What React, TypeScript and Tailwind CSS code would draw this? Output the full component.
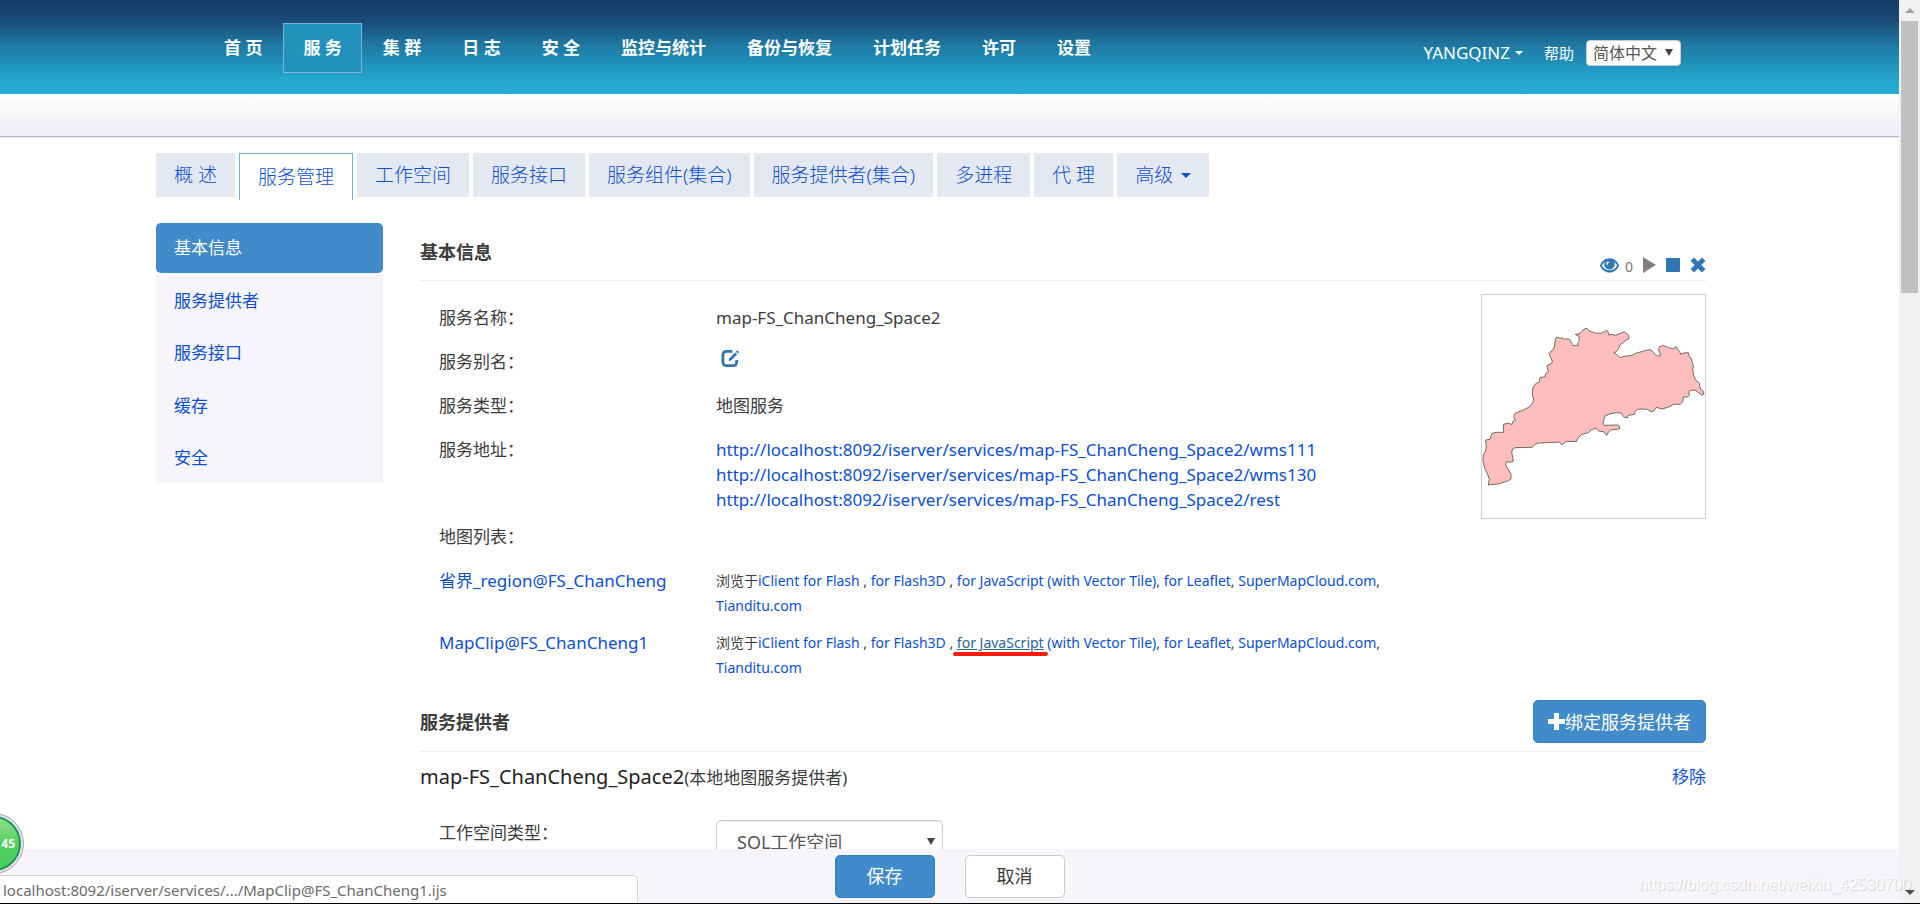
import type { ReactNode } from "react";

const navItems = [
  "首 页",
  "服 务",
  "集 群",
  "日 志",
  "安 全",
  "监控与统计",
  "备份与恢复",
  "计划任务",
  "许可",
  "设置",
];

const tabs = [
  "概 述",
  "服务管理",
  "工作空间",
  "服务接口",
  "服务组件(集合)",
  "服务提供者(集合)",
  "多进程",
  "代 理",
];

const sideItems = ["基本信息", "服务提供者", "服务接口", "缓存", "安全"];

const base = "http://localhost:8092/iserver/services/map-FS_ChanCheng_Space2";
const addresses = [`${base}/wms111`, `${base}/wms130`, `${base}/rest`];

function Caret({ className }: { className: string }) {
  return (
    <svg viewBox="0 0 10 5" className={className} aria-hidden="true">
      <path d="M0 0h10L5 5z" fill="currentColor" />
    </svg>
  );
}

function SelectArrow({ className }: { className: string }) {
  return (
    <svg
      viewBox="0 0 8 7"
      className={`pointer-events-none absolute h-[7px] w-2 text-[#444] ${className}`}
      aria-hidden="true"
    >
      <path d="M0 0h8L4 7z" fill="currentColor" />
    </svg>
  );
}

function EyeIcon() {
  return (
    <svg viewBox="1 1 18 14" className="h-[15px] w-[19px]" aria-hidden="true">
      <path
        d="M10 1.2C5.600 1.200 2.300 4.400 1 8c1.300 3.600 4.600 6.700 9 6.700s7.700-3.100 9-6.700C17.700 4.400 14.400 1.200 10 1.200z"
        fill="#3276b1"
      />
      <path
        d="M5.600 4.600C4.300 5.500 3.300 6.700 2.800 8c1.200 2.700 3.900 4.600 7.200 4.600s6-1.900 7.200-4.600c-.5-1.300-1.500-2.500-2.800-3.400.4.800.6 1.500.6 2.300a5 5 0 0 1-10 0c0-.8.200-1.500.6-2.300z"
        fill="#fff"
      />
      <path d="M8.600 4c-1.100.5-1.800 1.500-1.800 2.800l1.500.8C8.200 6.300 8.900 5.700 9.800 5.300z" fill="#fff" />
    </svg>
  );
}

function EditIcon() {
  return (
    <svg viewBox="0 0 20 20" className="h-[19px] w-[19px]" fill="none" aria-hidden="true">
      <path
        d="M12 2.500H5.500a3.500 3.500 0 0 0-3.500 3.500v8a3.500 3.500 0 0 0 3.500 3.500h7.500a3.500 3.500 0 0 0 3.500-3.500v-2.500"
        stroke="#3276b1"
        strokeWidth="3"
      />
      <path d="M8 12.800l.8-3.100 6-6 2.200 2.200-6 6z" fill="#3276b1" />
      <path d="M15.700 2.800l1.400-1.400 2 2-1.400 1.400z" fill="#3276b1" />
    </svg>
  );
}

function CrossIcon() {
  return (
    <svg viewBox="0 0 16 16" className="h-4 w-4" aria-hidden="true">
      <path
        d="M4 .6 8 4.600l4-4L15.400 4l-4 4 4 4L12 15.400l-4-4-4 4L.6 12l4-4-4-4z"
        fill="#3276b1"
      />
    </svg>
  );
}

function ProvinceMap() {
  return (
    <svg viewBox="66 165 669 669" className="block h-full w-full" aria-label="地图缩略图" role="img">
      <path
        d="M288 293L296 292 300 296 306 293 313 298 320 296 330 299 334 308 341 318 347 316 355 316 353 308 358 303 356 294 359 289 352 287 346 283 360 281 368 271 378 265 384 268 387 273 398 276 408 280 418 279 424 281 428 276 433 277 438 271 444 274 446 285 456 283 466 286 480 281 492 275 498 280 507 287 506 297 496 302 489 309 480 314 475 327 469 335 461 338 472 345 480 353 492 349 505 347 516 347 522 342 530 339 545 335 558 331 570 329 578 334 586 344 592 348 601 347 600 338 596 332 598 321 608 316 620 320 632 325 640 326 646 321 650 321 652 329 659 334 662 343 672 339 685 338 687 347 693 354 697 368 701 380 698 384 701 406 707 420 718 430 720 444 731 456 731 464 725 465 716 458 704 450 692 451 686 455 689 465 682 471 670 471 668 486 660 493 642 492 628 500 607 507 588 502 583 512 574 515 562 508 548 507 532 508 526 514 523 523 505 526 502 534 490 530 484 519 470 518 448 522 434 529 430 545 429 552 434 556 473 555 480 561 478 567 452 570 446 575 440 586 431 575 416 573 409 565 396 568 385 578 364 584 354 594 349 605 320 604 305 614 298 606 236 609 225 613 217 622 165 623 158 628 155 636 158 652 160 664 148 667 140 664 137 675 146 690 153 703 153 717 140 724 118 731 85 735 88 718 83 703 74 685 69 662 70 645 77 633 79 618 77 600 90 598 96 580 110 577 131 577 130 553 146 549 156 554 158 545 166 541 161 530 166 519 190 510 208 501 218 489 221 477 217 465 218 445 226 432 238 425 240 412 254 411 257 401 265 396 261 377 275 370 277 363 271 350 267 340 276 332 283 322 285 306z"
        fill="#ffbebe"
        stroke="#6e6e5c"
        strokeWidth="3"
        strokeLinejoin="round"
      />
    </svg>
  );
}

function Row({ label, tall, children }: { label: ReactNode; tall?: boolean; children?: ReactNode }) {
  return (
    <div className={`grid grid-cols-[277px_minmax(0,1fr)] ${tall ? "mb-3" : "mb-[19px]"}`}>
      <dt>{label}</dt>
      <dd>{children}</dd>
    </div>
  );
}

function ViewLinks({ marked }: { marked?: boolean }) {
  return (
    <p className="text-sm leading-[25px]">
      浏览于<a href="#flash" className="text-[#0b50d0]">iClient for Flash</a> ,{" "}
      <a href="#flash3d" className="text-[#0b50d0]">for Flash3D</a> ,{" "}
      {marked ? (
        <a href="#js" className="relative text-[#2a6496] underline">
          for JavaScript
          <span className="absolute -inset-x-1 -bottom-1 h-1 rounded-full bg-[#ff1c0c]" />
        </a>
      ) : (
        <a href="#js" className="text-[#0b50d0]">for JavaScript</a>
      )}{" "}
      <a href="#vector" className="text-[#0b50d0]">(with Vector Tile)</a>,{" "}
      <a href="#leaflet" className="text-[#0b50d0]">for Leaflet</a>,{" "}
      <a href="#cloud" className="text-[#0b50d0]">SuperMapCloud.com</a>,{" "}
      <a href="#tianditu" className="text-[#0b50d0]">Tianditu.com</a>
    </p>
  );
}

function Header() {
  return (
    <header className="h-[94px] shrink-0 bg-[linear-gradient(#163966_0%,#194a75_20%,#1f7ba5_50%,#23a5cd_84%,#26acd1_100%)] text-white">
      <div className="mx-auto flex max-w-[1587px] justify-between pl-12 pr-[62px]">
        <nav className="flex gap-px pt-[23px] text-[17px] font-bold">
          {navItems.map((item, i) => (
            <a
              key={item}
              href="#nav"
              className={`flex h-[50px] items-center whitespace-nowrap border px-[19px] ${
                i === 1 ? "border-[#7fb3d3] bg-[#2192bb]" : "border-transparent"
              }`}
            >
              {item}
            </a>
          ))}
        </nav>
        <div className="mt-10 flex h-[26px] items-center">
          <button className="flex items-center gap-[5px] text-[17px]">
            YANGQINZ
            <Caret className="h-1 w-2" />
          </button>
          <a href="#help" className="ml-[21px] text-[15px]">帮助</a>
          <div className="relative ml-3">
            <select
              aria-label="语言"
              className="block h-[26px] w-[95px] appearance-none rounded border border-[#ccc] bg-white pl-[6px] text-base leading-6 text-[#555]"
            >
              <option>简体中文</option>
            </select>
            <SelectArrow className="right-2 top-[9px]" />
          </div>
        </div>
      </div>
    </header>
  );
}

function Tabs() {
  return (
    <nav className="flex h-[47px] items-start gap-1 text-[19px] font-light text-[#0b50d0]">
      {tabs.map((tab, i) => (
        <a
          key={tab}
          href="#tab"
          className={
            i === 1
              ? "flex h-[47px] items-center whitespace-nowrap border border-b-0 border-[#6fb1df] bg-white px-[18px]"
              : "flex h-11 items-center whitespace-nowrap bg-[#e4e8f0] px-[18px]"
          }
        >
          {tab}
        </a>
      ))}
      <button className="flex h-11 items-center gap-2 bg-[#e4e8f0] px-[18px]">
        高级
        <Caret className="h-[5px] w-[10px]" />
      </button>
    </nav>
  );
}

function Sidebar() {
  return (
    <aside className="flex h-[260px] w-[227px] shrink-0 flex-col justify-between bg-[#f7f5fa]">
      {sideItems.map((item, i) => (
        <a
          key={item}
          href="#side"
          className={`flex h-[50px] items-center px-[18px] ${
            i === 0 ? "rounded-[5px] bg-[#428bca] text-white" : "text-[#0b50d0]"
          }`}
        >
          {item}
        </a>
      ))}
    </aside>
  );
}

function BasicInfo() {
  return (
    <section>
      <div className="flex h-[58px] items-center justify-between border-b border-[#eee]">
        <h2 className="text-lg font-bold">基本信息</h2>
        <div className="flex items-center gap-[10px] self-end pb-[7px]">
          <button aria-label="访问量" className="-mr-1">
            <EyeIcon />
          </button>
          <span className="self-end text-sm leading-3 text-[#777]">0</span>
          <button aria-label="启动">
            <svg viewBox="0 0 13 16" className="h-4 w-[13px]" aria-hidden="true">
              <path d="M0 0l13 8-13 8z" fill="#7f7f7f" />
            </svg>
          </button>
          <button aria-label="停止">
            <svg viewBox="0 0 14 14" className="h-[14px] w-[14px]" aria-hidden="true">
              <rect width="14" height="14" rx="1" fill="#3276b1" />
            </svg>
          </button>
          <button aria-label="删除">
            <CrossIcon />
          </button>
        </div>
      </div>
      <div className="flex justify-between pl-[19px]">
        <dl className="min-w-0 flex-1 pr-[90px] pt-6 leading-[25px]">
          <Row label="服务名称：">map-FS_ChanCheng_Space2</Row>
          <Row label="服务别名：">
            <button aria-label="编辑别名" className="block pl-[5px]">
              <EditIcon />
            </button>
          </Row>
          <Row label="服务类型：">地图服务</Row>
          <Row label="服务地址：" tall>
            {addresses.map((url) => (
              <a key={url} href={url} className="block text-[#0b50d0]">
                {url}
              </a>
            ))}
          </Row>
          <Row label="地图列表：" />
          <Row
            tall
            label={
              <a href="#region" className="text-[#0b50d0]">
                省界_region@FS_ChanCheng
              </a>
            }
          >
            <ViewLinks />
          </Row>
          <Row
            tall
            label={
              <a href="#clip" className="text-[#0b50d0]">
                MapClip@FS_ChanCheng1
              </a>
            }
          >
            <ViewLinks marked />
          </Row>
        </dl>
        <div className="mt-[13px] h-[225px] w-[225px] shrink-0 border border-[#ccc]">
          <ProvinceMap />
        </div>
      </div>
    </section>
  );
}

function Providers() {
  return (
    <section>
      <div className="flex h-[60px] items-center justify-between border-b border-[#eee]">
        <h2 className="text-lg font-bold">服务提供者</h2>
        <button className="flex h-[43px] items-center rounded-[5px] border border-[#357ebd] bg-[#428bca] px-[14px] text-lg text-white">
          <svg viewBox="0 0 17 17" className="h-[17px] w-[17px]" aria-hidden="true">
            <path d="M6 0h5v6h6v5h-6v6H6v-6H0V6h6z" fill="currentColor" />
          </svg>
          绑定服务提供者
        </button>
      </div>
      <div className="flex h-[50px] items-center justify-between">
        <h3>
          <span className="text-xl text-[#222]">map-FS_ChanCheng_Space2</span>
          (本地地图服务提供者)
        </h3>
        <a href="#remove" className="text-[#0b50d0]">移除</a>
      </div>
      <div className="flex pl-[19px] pt-[18px]">
        <label htmlFor="workspace-type" className="w-[277px] leading-[25px]">
          工作空间类型：
        </label>
        <div className="relative">
          <select
            id="workspace-type"
            className="block h-[43px] w-[227px] appearance-none rounded-[5px] border border-[#ccc] bg-white pl-5 text-lg text-[#555] shadow-[inset_0_1px_1px_rgba(0,0,0,0.08)]"
          >
            <option>SQL工作空间</option>
          </select>
          <SelectArrow className="right-2 top-[18px]" />
        </div>
      </div>
    </section>
  );
}

export default function App() {
  return (
    <div className="flex h-screen overflow-hidden border-b border-black bg-white font-['Noto_Sans','Noto_Sans_CJK_SC',sans-serif] text-[17px] text-[#3c3c3c]">
      <div className="relative flex min-w-0 flex-1 flex-col">
        <Header />
        <div className="h-11 shrink-0 border-b border-[#e6e8ef] bg-linear-to-b from-white to-[#ebedf1]">
          <div className="h-[43px] border-b border-[#b7bbd0]" />
        </div>
        <main className="min-h-0 flex-1 overflow-hidden">
          <div className="mx-auto max-w-[1587px] pr-[37px] pt-[15px]">
            <Tabs />
            <div className="flex gap-[37px] pt-[23px]">
              <Sidebar />
              <div className="min-w-0 flex-1">
                <BasicInfo />
                <Providers />
              </div>
            </div>
          </div>
        </main>
        <footer className="flex h-[54px] shrink-0 items-center justify-center gap-[30px] bg-[#f7f5fa] text-lg">
          <button className="h-[43px] w-[100px] rounded-[5px] border border-[#357ebd] bg-[#428bca] text-white">
            保存
          </button>
          <button className="h-[43px] w-[100px] rounded-[5px] border border-[#ccc] bg-white">取消</button>
        </footer>

        {/* browser status bubble */}
        <div className="absolute bottom-0 left-0 h-7 w-[638px] rounded-tr-[5px] border-r border-t border-[#d3d3d8] bg-white pl-[3px] text-[15px] leading-7 text-[#6b6b6b]">
          localhost:8092/iserver/services/.../MapClip@FS_ChanCheng1.ijs
        </div>
        <div className="absolute bottom-[29px] left-0 h-[61px] w-6 overflow-hidden">
          <div className="absolute right-0 flex h-[61px] w-[61px] items-center justify-end rounded-full border border-[#aaa] bg-[#e4e4e6] p-[2px]">
            <div className="flex h-full w-full items-center justify-end rounded-full border-2 border-[#1f9560] bg-linear-to-b from-[#8fe089] via-[#52cf63] to-[#4bcb5d] pr-1 text-xs font-bold text-white">
              45
            </div>
          </div>
        </div>
      </div>

      {/* page scrollbar */}
      <div className="relative flex w-[21px] shrink-0 flex-col items-center bg-[#f1f1f1]">
        <div className="flex h-[21px] items-center text-[#a3a3a3]">
          <Caret className="h-[5px] w-[10px] rotate-180" />
        </div>
        <div className="h-[272px] w-[17px] bg-[#c1c1c1]" />
        <div className="mt-auto flex h-[21px] items-center text-[#505050]">
          <Caret className="h-[5px] w-[10px]" />
        </div>
        <div className="absolute bottom-2 right-[9px] whitespace-nowrap font-['Liberation_Sans',sans-serif] text-base leading-5 text-white/80 [text-shadow:1px_1px_1px_rgba(0,0,0,0.15)]">
          https://blog.csdn.net/weixin_42530700
        </div>
      </div>
    </div>
  );
}
